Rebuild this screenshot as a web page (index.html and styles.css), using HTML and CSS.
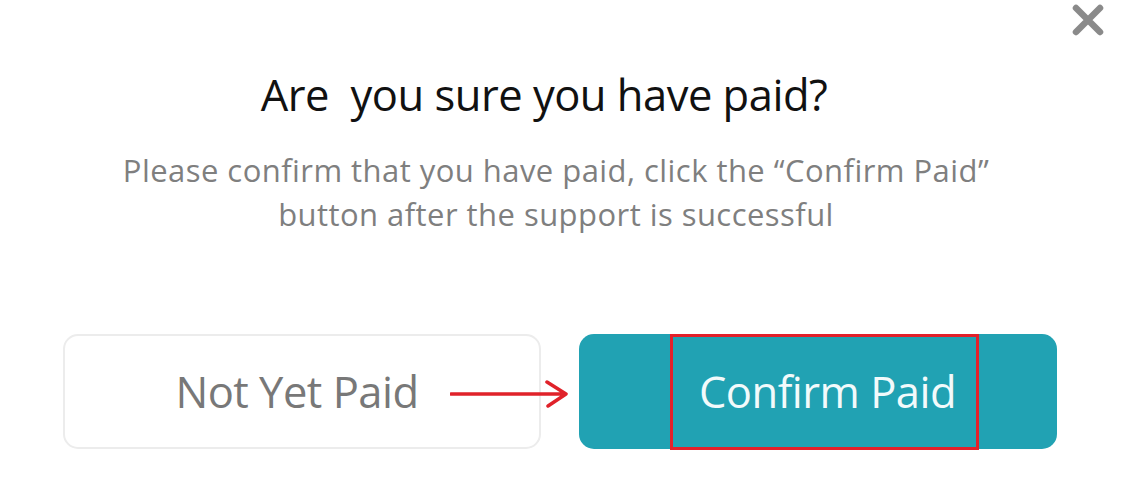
FILE: index.html
```html
<!DOCTYPE html>
<html>
<head>
<meta charset="utf-8">
<link rel="stylesheet" href="styles.css">
</head>
<body>
<div class="dialog">
  <button class="close" aria-label="Close">
    <svg width="32" height="32" viewBox="0 0 32 32"><path d="M4 4 L28 28 M28 4 L4 28" stroke="#8a8a8a" stroke-width="6.5" stroke-linecap="round"/></svg>
  </button>
  <h1 class="title">Are&nbsp; you sure you have paid?</h1>
  <p class="desc">Please confirm that you have paid, click the “Confirm Paid”<br>button after the support is successful</p>
  <div class="actions">
    <button class="btn btn-secondary">Not Yet Paid</button>
    <button class="btn btn-primary">Confirm Paid<span class="highlight"></span></button>
    <svg class="arrow" width="120" height="30" viewBox="0 0 120 30"><path d="M1 15 H116 M97 3 L116 15 L98 27" fill="none" stroke="#e0222a" stroke-width="3.5" stroke-linecap="round" stroke-linejoin="round"/></svg>
  </div>
</div>
</body>
</html>
```
FILE: styles.css
```css
html, body {
  margin: 0;
  padding: 0;
  background: #ffffff;
}
.dialog {
  position: relative;
  width: 1126px;
  height: 500px;
  font-family: "Open Sans", "Noto Sans", sans-serif;
  overflow: hidden;
}
.close {
  position: absolute;
  top: 4px;
  right: 22px;
  padding: 0;
  border: 0;
  background: none;
  width: 32px;
  height: 32px;
}
.close svg { display: block; }
.title {
  margin: 0;
  padding-top: 69px;
  padding-right: 38px;
  text-align: center;
  font-size: 43.5px;
  font-weight: 400;
  color: #111111;
  line-height: 52px;
  letter-spacing: -0.5px;
}
.desc {
  margin: 27px 0 0;
  padding-right: 14px;
  text-align: center;
  font-size: 31px;
  line-height: 44px;
  color: #7f7f7f;
  letter-spacing: 0.45px;
}
.actions {
  position: relative;
  display: flex;
  gap: 38px;
  padding-left: 63px;
  margin-top: 98px;
}
.btn {
  height: 115px;
  width: 478px;
  border-radius: 15px;
  font-family: inherit;
  font-size: 43.5px;
  letter-spacing: -0.5px;
  padding: 0;
  box-sizing: border-box;
}
.btn-secondary {
  background: #ffffff;
  border: 2px solid #ececec;
  color: #787878;
  padding-right: 10px;
}
.btn-primary {
  position: relative;
  background: #21a2b3;
  border: 0;
  color: #f2fafb;
  padding-left: 19px;
}
.highlight {
  position: absolute;
  left: 91px;
  top: 0;
  width: 309px;
  height: 116px;
  box-sizing: border-box;
  border: 3.5px solid #e3202a;
}
.arrow {
  position: absolute;
  left: 450px;
  top: 45px;
}
```
